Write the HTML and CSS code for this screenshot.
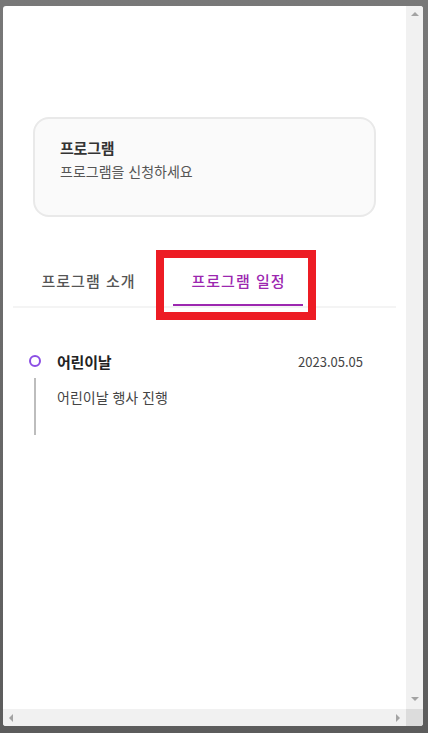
FILE: index.html
```html
<!DOCTYPE html>
<html lang="ko">
<head>
<meta charset="utf-8">
<title>프로그램</title>
<link rel="stylesheet" href="styles.css">
</head>
<body>
<div class="modal">
  <div class="content">
    <section class="card">
      <h2 class="card-title">프로그램</h2>
      <p class="card-sub">프로그램을 신청하세요</p>
    </section>
    <nav class="tabs">
      <div class="tab">프로그램 소개</div>
      <div class="tab active">프로그램 일정</div>
    </nav>
    <ul class="timeline">
      <li class="item">
        <span class="dot"></span>
        <div class="item-head">
          <span class="item-title">어린이날</span>
          <span class="item-date">2023.05.05</span>
        </div>
        <span class="rail"></span>
        <p class="item-desc">어린이날 행사 진행</p>
      </li>
    </ul>
  </div>
  <div class="vscroll">
    <span class="arrow up"></span>
    <span class="arrow down"></span>
  </div>
  <div class="hscroll">
    <span class="arrow left"></span>
    <span class="arrow right"></span>
  </div>
  <div class="corner"></div>
</div>
<div class="highlight"></div>
</body>
</html>
```
FILE: styles.css
```css
html, body {
  margin: 0;
  padding: 0;
}
body {
  width: 428px;
  height: 733px;
  overflow: hidden;
  background: linear-gradient(#787878, #5c5c5c);
  font-family: "Noto Sans CJK KR", "Noto Sans", sans-serif;
  position: relative;
}
.modal {
  width: 420px;
  height: 720px;
  margin: 6px 0 0 3px;
  background: #fff;
  border-radius: 3px;
  overflow: hidden;
  display: grid;
  grid-template-columns: 1fr 17px;
  grid-template-rows: 1fr 17px;
}
.content {
  overflow: hidden;
  padding-top: 111px;
}
.card {
  margin: 0 30px;
  height: 100px;
  box-sizing: border-box;
  border: 2px solid #e9e9e9;
  border-radius: 16px;
  background: #fafafa;
  padding: 18px 25px 0;
}
.card-title {
  margin: 0;
  font-size: 15px;
  font-weight: 700;
  line-height: 22px;
  color: #333;
  letter-spacing: -0.2px;
}
.card-sub {
  margin: 1px 0 0;
  font-size: 14px;
  line-height: 22px;
  color: #555;
}
.tabs {
  margin: 39px 10px 0;
  padding-left: 10px;
  display: flex;
  gap: 20px;
  border-bottom: 2px solid #f4f4f4;
}
.tab {
  width: 130px;
  height: 50px;
  box-sizing: border-box;
  line-height: 50px;
  text-align: center;
  font-size: 15px;
  font-weight: 500;
  letter-spacing: 1px;
  text-indent: 1px;
  color: #555;
}
.tab.active {
  color: #9c27b0;
  border-bottom: 2px solid #9c27b0;
}
.timeline {
  list-style: none;
  margin: 41px 0 0;
  padding: 0 43px 0 26px;
}
.item {
  display: grid;
  grid-template-columns: 12px 1fr;
  column-gap: 16px;
}
.dot {
  align-self: center;
  width: 12px;
  height: 12px;
  box-sizing: border-box;
  border: 2px solid #8b4ee4;
  border-radius: 50%;
}
.item-head {
  display: flex;
  justify-content: space-between;
  align-items: center;
  height: 24px;
}
.item-title {
  font-size: 15px;
  font-weight: 700;
  color: #222;
  letter-spacing: -0.2px;
}
.item-date {
  font-size: 13px;
  color: #444;
}
.rail {
  justify-self: center;
  width: 2px;
  height: 57px;
  margin-top: 5px;
  background: #bdbdbd;
}
.item-desc {
  margin: 0;
  padding-top: 14px;
  font-size: 14px;
  line-height: 20px;
  color: #444;
}
.vscroll {
  background: #f1f1f1;
  display: flex;
  flex-direction: column;
  justify-content: space-between;
  align-items: center;
  padding: 6px 0 8px;
}
.hscroll {
  background: #f1f1f1;
  display: flex;
  justify-content: space-between;
  align-items: center;
  padding: 0 6px 0 6px;
}
.corner {
  background: #dcdcdc;
}
.arrow {
  width: 0;
  height: 0;
  border: 4px solid transparent;
}
.arrow.up {
  border-top: 0;
  border-bottom-color: #a3a3a3;
}
.arrow.down {
  border-bottom: 0;
  border-top-color: #a3a3a3;
}
.arrow.left {
  border-left: 0;
  border-right-color: #a3a3a3;
}
.arrow.right {
  border-right: 0;
  border-left-color: #a3a3a3;
}
.highlight {
  position: absolute;
  left: 156px;
  top: 250px;
  width: 160px;
  height: 70px;
  box-sizing: border-box;
  border: 8px solid #ed1c24;
}
```
